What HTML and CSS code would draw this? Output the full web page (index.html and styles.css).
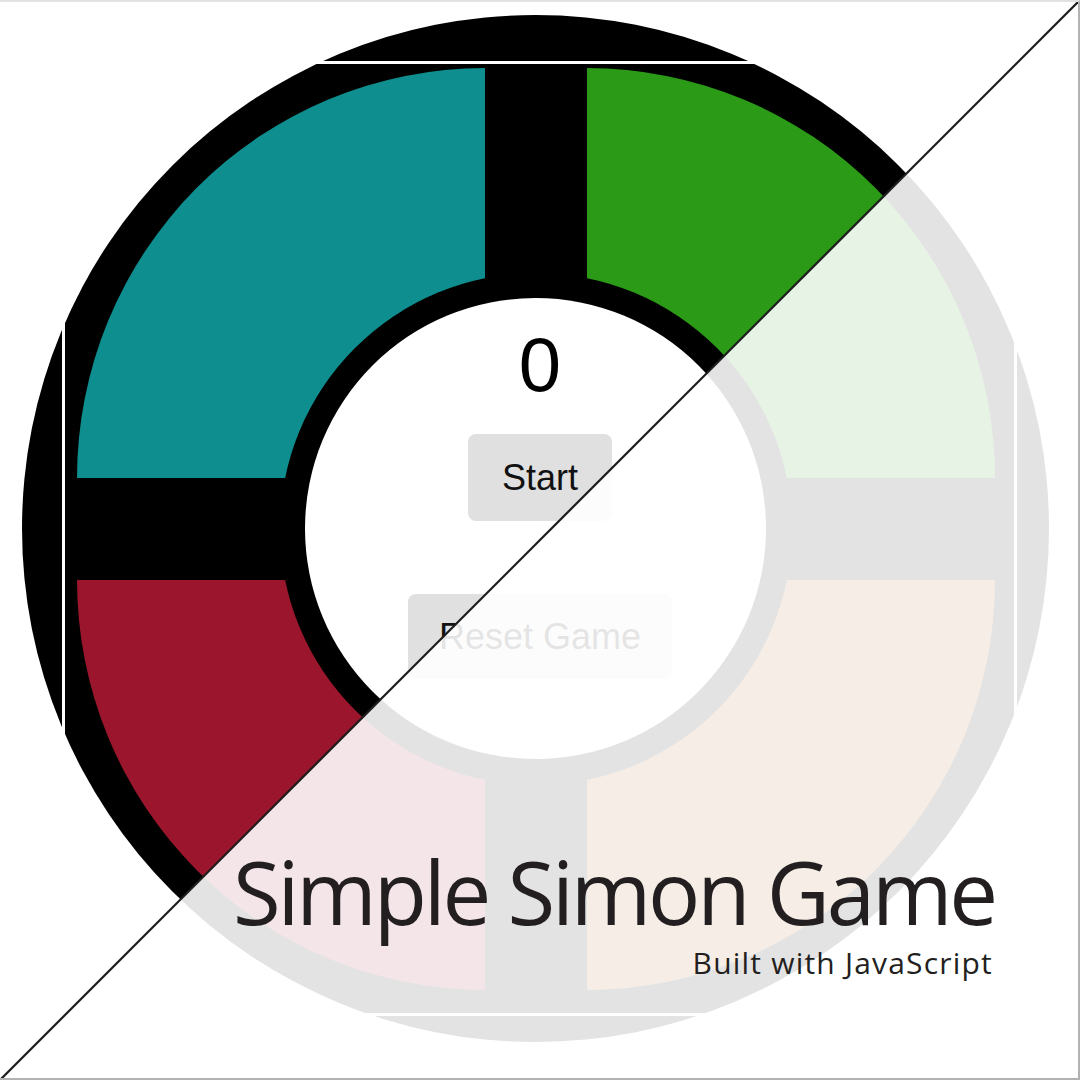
FILE: index.html
```html
<!DOCTYPE html>
<html lang="en">
<head>
<meta charset="utf-8">
<title>Simple Simon Game</title>
<link rel="stylesheet" href="styles.css">
</head>
<body>
<div class="frame">
  <div class="board">
    <div class="pad pad-teal"></div>
    <div class="pad pad-green"></div>
    <div class="pad pad-red"></div>
    <div class="pad pad-gold"></div>
    <div class="hub-ring">
      <div class="hub">
        <div class="score">0</div>
        <button class="btn btn-start" type="button">Start</button>
        <button class="btn btn-reset" type="button">Reset Game</button>
      </div>
    </div>
  </div>
  <div class="outline"></div>
  <div class="fade"></div>
  <svg class="diagonal" width="1078" height="1076" viewBox="0 0 1078 1076" aria-hidden="true">
    <line x1="1079" y1="-1" x2="-1" y2="1079" stroke="#1c1c1c" stroke-width="2.2"/>
  </svg>
  <div class="caption">
    <h1 class="title">Simple Simon Game</h1>
    <p class="subtitle">Built with JavaScript</p>
  </div>
</div>
</body>
</html>
```
FILE: styles.css
```css
html, body {
  margin: 0;
  padding: 0;
  background: #ffffff;
}

.frame {
  position: relative;
  width: 1080px;
  height: 1080px;
  box-sizing: border-box;
  border-top: 2px solid #e2e2e2;
  border-right: 2px solid #b2b2b2;
  border-bottom: 2px solid #b2b2b2;
  padding: 13px 0 0 22px;
  overflow: hidden;
  background: #ffffff;
}

.board {
  position: relative;
  width: 1027px;
  height: 1027px;
  box-sizing: border-box;
  border-radius: 50%;
  background: #000000;
  padding: 53px 0 0 55px;
  display: grid;
  grid-template-columns: 408px 408px;
  grid-template-rows: 410px 410px;
  column-gap: 102px;
  row-gap: 102px;
}

.pad-teal {
  background: #0e8e8e;
  border-top-left-radius: 100%;
}

.pad-green {
  background: #2a9a17;
  border-top-right-radius: 100%;
}

.pad-red {
  background: #9b162d;
  border-bottom-left-radius: 100%;
}

.pad-gold {
  background: #ad641c;
  border-bottom-right-radius: 100%;
}

.hub-ring {
  position: absolute;
  inset: 0;
  margin: auto;
  width: 512px;
  height: 512px;
  border-radius: 50%;
  background: #000000;
  display: flex;
  align-items: center;
  justify-content: center;
}

.hub {
  width: 461px;
  height: 461px;
  box-sizing: border-box;
  border-radius: 50%;
  background: #ffffff;
  padding: 29px 0 0 9px;
  display: flex;
  flex-direction: column;
  align-items: center;
}

.score {
  font-family: "Liberation Sans", Arial, sans-serif;
  font-size: 76px;
  line-height: 76px;
  color: #000000;
}

.btn {
  font-family: "Liberation Sans", Arial, sans-serif;
  font-size: 36px;
  line-height: 41px;
  color: #111111;
  background: #e0e0e0;
  border: none;
  border-radius: 8px;
  margin: 0;
}

.btn-start {
  margin-top: 31px;
  padding: 23px 34px;
}

.btn-reset {
  margin-top: 73px;
  padding: 22px 31px;
}

.outline {
  position: absolute;
  left: 62px;
  top: 59px;
  width: 955px;
  height: 955px;
  box-sizing: border-box;
  border: 3px solid #ffffff;
}

.fade {
  position: absolute;
  inset: 0;
  background: rgba(255, 255, 255, 0.89);
  clip-path: polygon(1080px -2px, 1080px 1080px, -2px 1080px);
}

.diagonal {
  position: absolute;
  left: 0;
  top: 0;
  overflow: visible;
}

.caption {
  position: absolute;
  right: 86px;
  top: 846px;
  display: flex;
  flex-direction: column;
  align-items: flex-end;
  gap: 13px;
  color: #231f20;
  font-family: "Open Sans", "Noto Sans", sans-serif;
}

.title {
  margin: 0;
  font-size: 87px;
  line-height: 87px;
  font-weight: 500;
  letter-spacing: -3.2px;
  margin-right: -3px;
}

.subtitle {
  margin: 0;
  font-size: 30px;
  line-height: 30px;
  font-weight: 500;
  letter-spacing: 1.2px;
  margin-right: -1px;
}
```
